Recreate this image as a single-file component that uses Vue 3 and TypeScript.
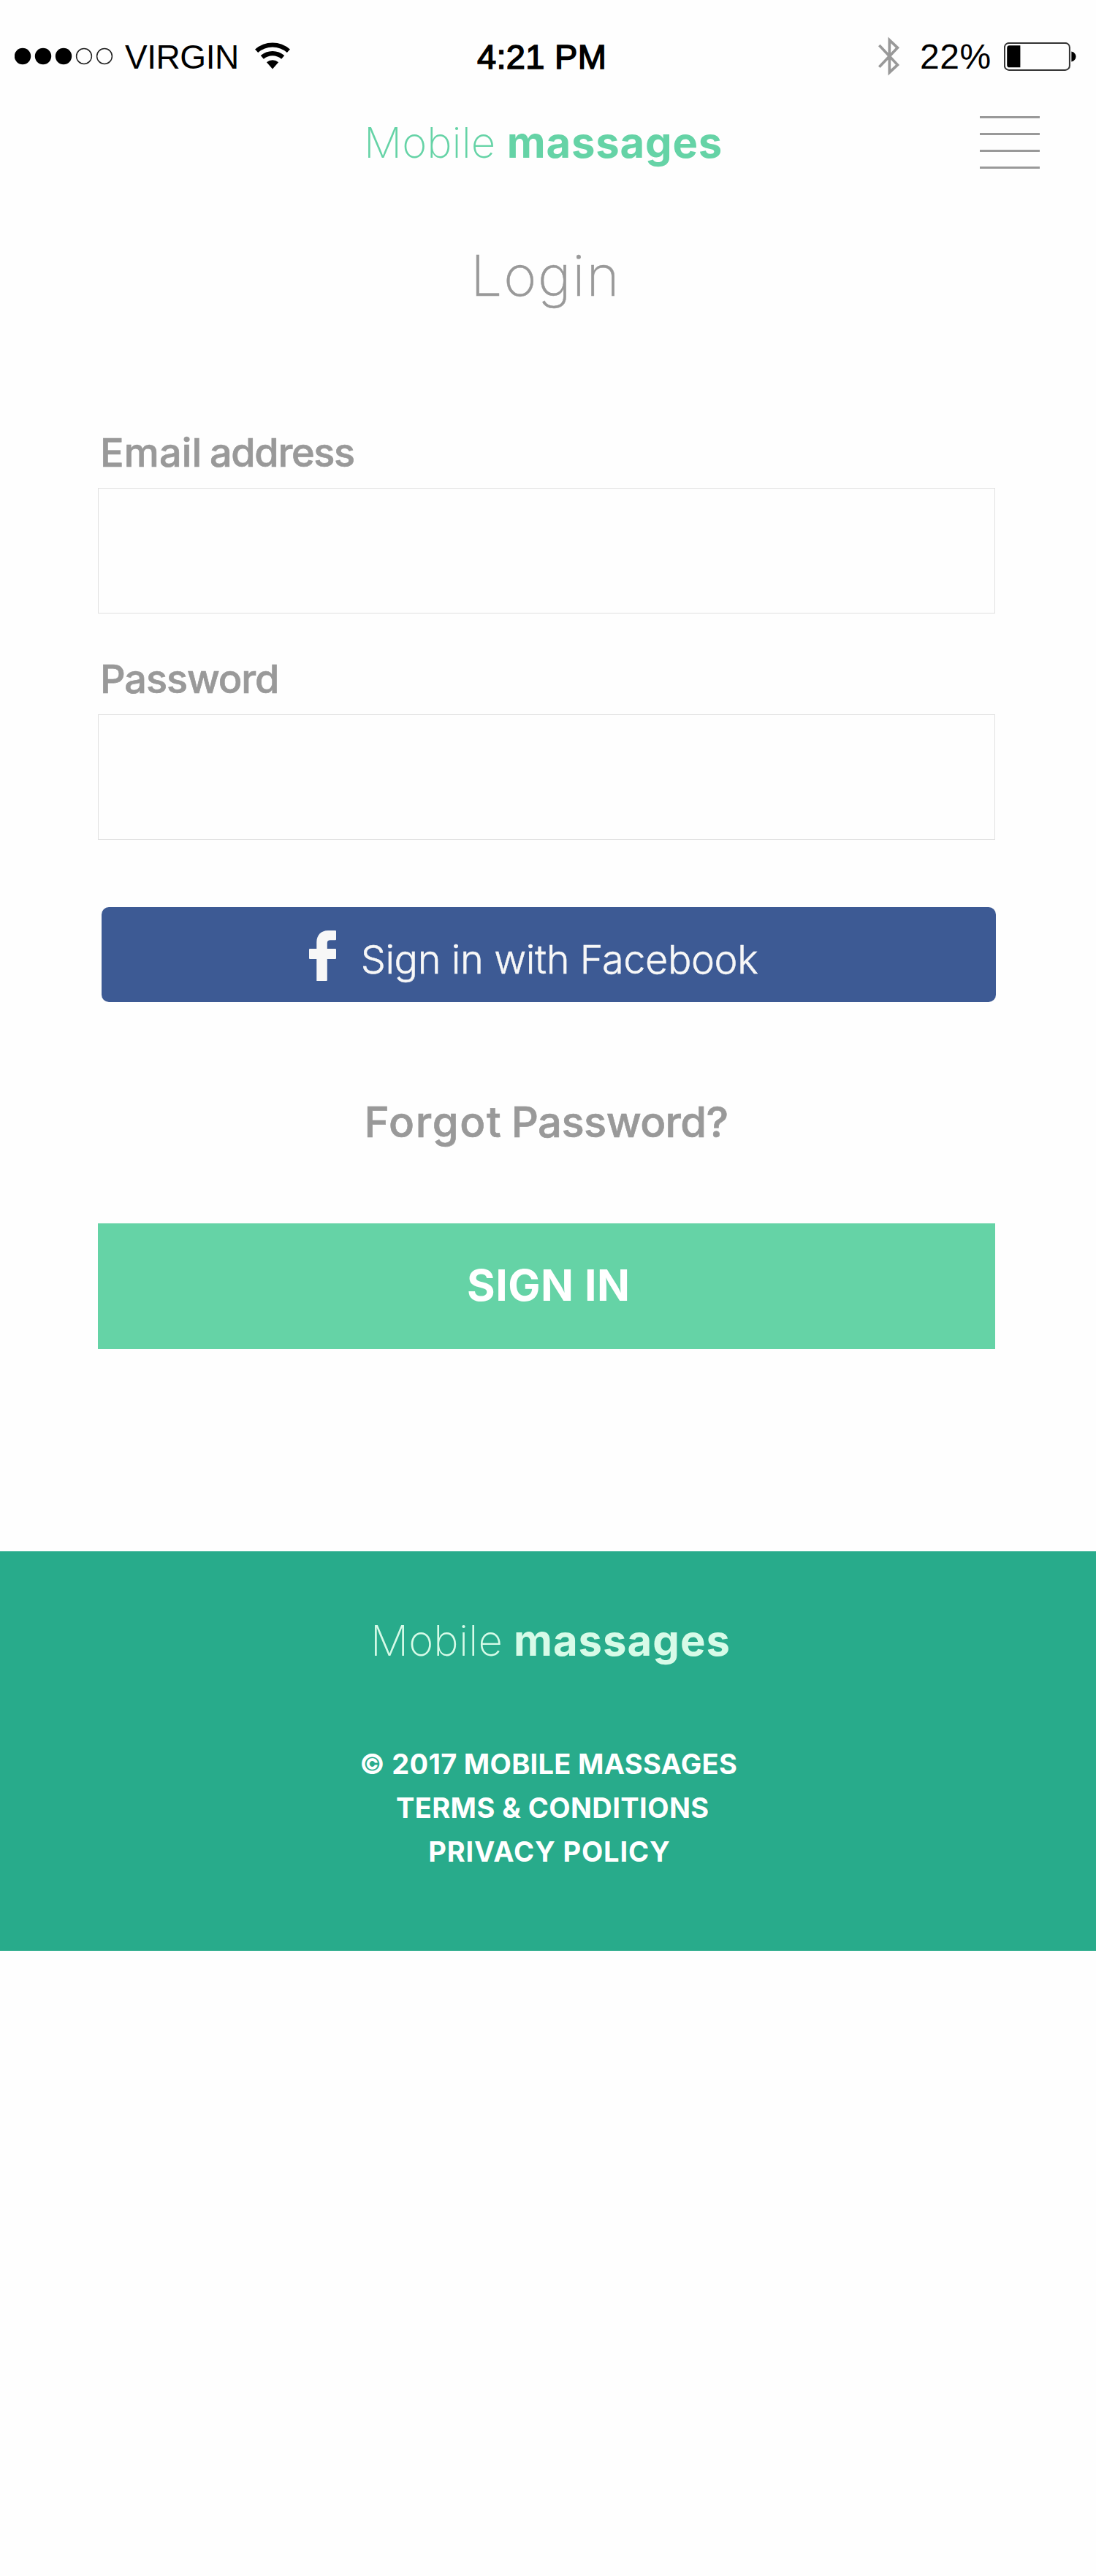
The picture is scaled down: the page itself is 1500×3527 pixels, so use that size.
<script setup lang="ts">
import { ref } from 'vue'

const email = ref('')
const password = ref('')

const signalDots = [true, true, true, false, false]
const menuLines = 4
</script>

<template>
  <div class="screen">
    <div class="status">
      <div class="status-left">
        <svg class="dots" viewBox="0 0 135 24">
          <circle
            v-for="(on, i) in signalDots"
            :key="i"
            :cx="11 + i * 28"
            cy="12"
            :r="on ? 11.2 : 10.4"
            :fill="on ? '#000' : 'none'"
            :stroke="on ? 'none' : '#222'"
            stroke-width="1.5"
          />
        </svg>
        <span class="carrier">VIRGIN</span>
        <svg class="wifi" viewBox="0 0 48 37" fill="none" stroke="#000" stroke-width="6.2">
          <path d="M2.1 11.8A33 33 0 0 1 45.9 11.8" />
          <path d="M9.8 20.4A21.5 21.5 0 0 1 38.2 20.4" />
          <path d="M24 36.5L15.9 27.3A12.3 12.3 0 0 1 32.1 27.3Z" fill="#000" stroke="none" />
        </svg>
      </div>
      <span class="time">4:21 PM</span>
      <div class="status-right">
        <svg class="bluetooth" viewBox="0 0 30 54" fill="none" stroke="#999" stroke-width="3.7">
          <path d="M1.3 12L26.4 38.8L15.3 49.2V4.8L26.4 15.3L1.3 41.8" />
        </svg>
        <span class="percent">22%</span>
        <svg class="battery" viewBox="0 0 99 39">
          <rect x="0.9" y="0.9" width="89" height="37" rx="6" fill="none" stroke="#333" stroke-width="2" />
          <path d="M22.4 4.3V34.3H7.6Q4.2 34.3 4.2 30.9V7.7Q4.2 4.3 7.6 4.3Z" />
          <path d="M92.4 12.4Q98.5 14.2 98.5 19.4Q98.5 24.6 92.4 26.4Z" />
        </svg>
      </div>
    </div>

    <header class="nav">
      <div class="brand"><span class="thin">Mobile</span><span class="bold">massages</span></div>
      <button class="menu" type="button" aria-label="Menu">
        <span v-for="n in menuLines" :key="n" class="menu-line"></span>
      </button>
    </header>

    <main>
      <h1 class="title">Login</h1>

      <form class="form" @submit.prevent>
        <label class="label" for="email"><span class="w-email">Email</span><span class="w-address">address</span></label>
        <input id="email" v-model="email" class="field" type="email" />

        <label class="label second" for="password"><span class="w-password">Password</span></label>
        <input id="password" v-model="password" class="field" type="password" />

        <button class="facebook" type="button">
          <svg class="fb-icon" viewBox="0 0 37 69" fill="#f7f7f7">
            <path d="M10.3 69V39H1Q0 39 0 38V26Q0 25 1 25H10.3V16C10.3 6.3 16.6 0 26 0H36Q37 0 37 1V12.3Q37 13.3 36 13.3H29C26 13.3 24.8 14.6 24.8 17.6V25H36Q37 25 37 26V38Q37 39 36 39H24.8V68Q24.8 69 23.8 69Z" />
          </svg>
          <span class="fb-text">Sign in with Facebook</span>
        </button>

        <a class="forgot"><span class="w-forgot">Forgot</span><span class="w-password-q">Password?</span></a>

        <button class="signin" type="submit"><span>SIGN IN</span></button>
      </form>
    </main>

    <footer class="footer">
      <div class="brand brand-footer"><span class="thin">Mobile</span><span class="bold">massages</span></div>
      <div class="links">
        <span class="copyright">© 2017 MOBILE MASSAGES</span>
        <a class="terms">TERMS &amp; CONDITIONS</a>
        <a class="privacy">PRIVACY POLICY</a>
      </div>
    </footer>
  </div>
</template>

<style>
body {
  background: #fefefe;
}
</style>

<style scoped>
.screen {
  width: 1500px;
  min-height: 3527px;
  box-sizing: border-box;
  background: #fefefe;
  color: #999;
  font-family: Inter, "Open Sans", sans-serif;
  overflow: hidden;
}

button {
  border: 0;
  padding: 0;
  margin: 0;
  background: none;
  font-family: inherit;
  color: inherit;
  text-align: left;
}

svg {
  display: block;
  flex: none;
}

span,
a {
  white-space: nowrap;
}

.status {
  display: grid;
  grid-template-columns: 653px 549px 1fr;
  align-items: center;
  height: 154px;
  color: #000;
  font-family: "Liberation Sans", Arial, sans-serif;
}

.status-left,
.status-right {
  display: flex;
  align-items: center;
}

.status-left {
  padding-left: 20px;
}

.dots {
  width: 135px;
  height: 24px;
}

.carrier {
  margin-left: 16px;
  width: 178px;
  padding-top: 2px;
  font-size: 46px;
  line-height: 60px;
  letter-spacing: -0.45px;
}

.wifi {
  width: 48px;
  height: 37px;
  margin-bottom: 2px;
}

.time {
  padding-top: 2px;
  font-size: 47px;
  line-height: 60px;
  letter-spacing: 0.3px;
  -webkit-text-stroke: 1.5px #000;
}

.bluetooth {
  width: 30px;
  height: 54px;
}

.percent {
  margin-left: 27px;
  width: 114.7px;
  padding-top: 2px;
  font-size: 48px;
  line-height: 60px;
  letter-spacing: 0.6px;
}

.battery {
  width: 99px;
  height: 39px;
}

.nav {
  display: flex;
  align-items: center;
  justify-content: space-between;
  height: 82px;
  padding: 0 77px 0 498px;
}

.brand {
  display: flex;
  gap: 15.6px;
  font-size: 58px;
  line-height: 70px;
  color: #65d3a6;
}

.thin {
  font-weight: 200;
  letter-spacing: 0.08px;
}

.bold {
  font-weight: 700;
  letter-spacing: 0.78px;
}

.menu {
  display: flex;
  flex-direction: column;
  gap: 20px;
  width: 82px;
}

.menu-line {
  height: 3px;
  background: #999;
}

.title {
  margin: 94px 0 0;
  padding-left: 644px;
  font-size: 77px;
  line-height: 94px;
  font-weight: 200;
  letter-spacing: 1.76px;
  -webkit-text-stroke: 0.5px #999;
}

.form {
  width: 1228px;
  margin: 163px 0 0 134px;
}

.label {
  display: flex;
  gap: 10.7px;
  padding-left: 3px;
  font-size: 54px;
  line-height: 65px;
  font-weight: 500;
  -webkit-text-stroke: 0.7px #999;
}

.second {
  margin-top: 57px;
}

.w-email {
  letter-spacing: 0.18px;
}

.w-address {
  letter-spacing: -1.35px;
}

.w-password {
  letter-spacing: -1.08px;
}

.field {
  display: block;
  box-sizing: border-box;
  width: 1228px;
  height: 172px;
  margin: 16px 0 0;
  padding: 0 30px;
  border: 1px solid #e1e1e1;
  border-radius: 0;
  outline: 0;
  background: #fefefe;
  font: 400 54px Inter, sans-serif;
  color: #999;
}

.facebook {
  display: flex;
  align-items: center;
  box-sizing: border-box;
  width: 1224px;
  height: 130px;
  margin: 92px 0 0 5px;
  padding-left: 284px;
  border-radius: 10px;
  background: #3d5a94;
  color: #f7f7f7;
}

.fb-icon {
  width: 37px;
  height: 69px;
  margin-top: 3px;
}

.fb-text {
  margin: 13px 0 0 33.7px;
  font-size: 54px;
  line-height: 66px;
  font-weight: 300;
  letter-spacing: -0.41px;
  -webkit-text-stroke: 0.5px #f7f7f7;
}

.forgot {
  display: flex;
  gap: 12.4px;
  margin-top: 129px;
  padding-left: 364.4px;
  font-size: 58px;
  line-height: 70px;
  font-weight: 500;
  -webkit-text-stroke: 0.7px #999;
}

.w-forgot {
  letter-spacing: 1.64px;
}

.w-password-q {
  letter-spacing: -0.63px;
}

.signin {
  display: flex;
  align-items: center;
  box-sizing: border-box;
  width: 1228px;
  height: 172px;
  margin-top: 104px;
  padding: 0 0 3px 505px;
  background: #65d3a6;
  color: #fff;
  font-size: 59px;
  line-height: 72px;
  font-weight: 700;
  letter-spacing: 0.5px;
}

.footer {
  box-sizing: border-box;
  height: 547px;
  margin-top: 277px;
  padding-top: 87px;
  background: #28ab8b;
}

.brand-footer {
  gap: 15px;
  padding-left: 506.9px;
  color: #d7fbe8;
}

.brand-footer .thin {
  letter-spacing: 0.22px;
}

.brand-footer .bold {
  letter-spacing: 1.01px;
}

.links {
  display: flex;
  flex-direction: column;
  margin-top: 104px;
  color: #fff;
  font-size: 38px;
  line-height: 60px;
  font-weight: 700;
}

.copyright {
  margin-left: 492px;
  letter-spacing: 0.3px;
}

.terms {
  margin-left: 541.9px;
  letter-spacing: 0.44px;
}

.privacy {
  margin-left: 586.2px;
  letter-spacing: 0.87px;
}
</style>
